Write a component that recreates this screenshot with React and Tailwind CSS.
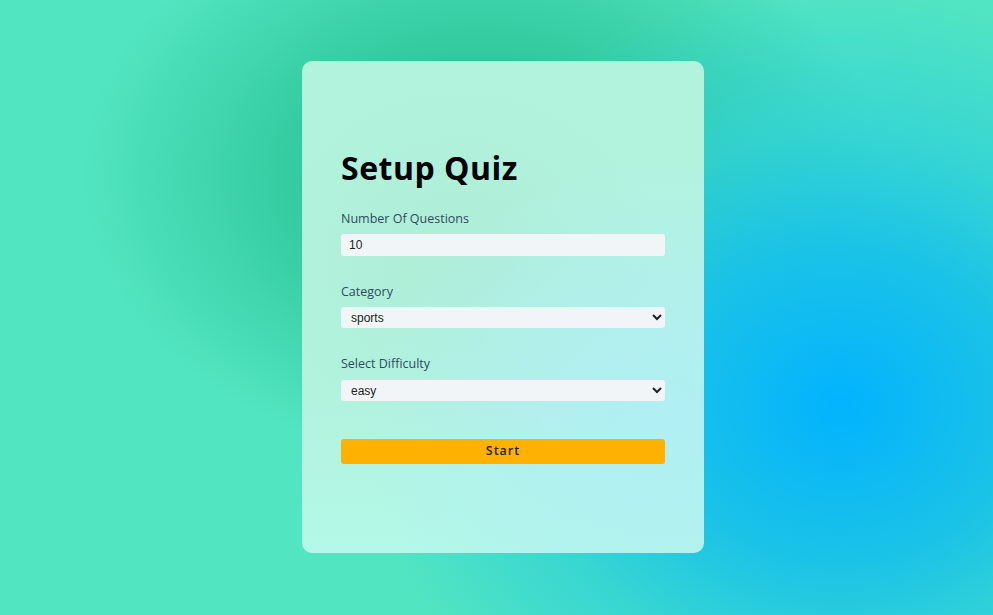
import { useState } from 'react'

export default function App() {
  const [amount, setAmount] = useState(10)
  const [category, setCategory] = useState('sports')
  const [difficulty, setDifficulty] = useState('easy')

  return (
    <main
      className="min-h-[615px] w-full flex items-start justify-center pt-[61px] pl-[13px] bg-[#52e5c1]"
      style={{
        backgroundImage:
          'radial-gradient(ellipse 480px 420px at 840px 405px, #02b3fe 0%, rgba(24,193,232,0.95) 38%, rgba(44,208,218,0.7) 65%, rgba(82,229,193,0) 100%), radial-gradient(ellipse 400px 290px at 480px 175px, #2bc396 0%, rgba(43,195,150,0.85) 40%, rgba(82,229,193,0) 100%)',
      }}
    >
      <section
        className="w-[402px] h-[492px] rounded-[10px] bg-[#b2f3de] px-[39px] pt-[87px] font-['Open_Sans','Noto_Sans',sans-serif]"
        style={{
          backgroundImage:
            'radial-gradient(ellipse 300px 260px at 360px 360px, #b0eff4 0%, rgba(176,239,244,0.6) 50%, rgba(178,243,222,0) 100%), radial-gradient(ellipse 200px 180px at 160px 200px, #aeedd6 0%, rgba(174,237,214,0) 100%), linear-gradient(180deg, rgba(180,246,224,0) 70%, #b3f8e8 100%)',
        }}
      >
        <h2 className="text-[32px] leading-[40px] font-bold tracking-[0.5px] text-black mb-[23px]">Setup Quiz</h2>

        <div className="mb-[28px]">
          <label htmlFor="amount" className="block text-[12.5px] leading-[16px] text-[#2f4a5f] mb-[7px]">
            Number Of Questions
          </label>
          <input
            id="amount"
            type="number"
            value={amount}
            onChange={(e) => setAmount(e.target.value)}
            className="block w-full h-[22px] rounded-[3px] bg-[#f1f5f8] px-[8px] text-[12px] text-[#222] font-['Liberation_Sans',Arial,sans-serif] outline-none [appearance:textfield] [&::-webkit-inner-spin-button]:appearance-none"
          />
        </div>

        <div className="mb-[28px]">
          <label htmlFor="category" className="block text-[12.5px] leading-[16px] text-[#2f4a5f] mb-[7px]">
            Category
          </label>
          <select
            id="category"
            value={category}
            onChange={(e) => setCategory(e.target.value)}
            className="block w-full h-[21px] rounded-[3px] bg-[#f1f5f8] pl-[6px] text-[12px] text-[#222] font-['Liberation_Sans',Arial,sans-serif] outline-none"
          >
            <option value="sports">sports</option>
            <option value="history">history</option>
            <option value="politics">politics</option>
          </select>
        </div>

        <div className="mb-[38px]">
          <label htmlFor="difficulty" className="block text-[12.5px] leading-[16px] text-[#2f4a5f] mb-[8px]">
            Select Difficulty
          </label>
          <select
            id="difficulty"
            value={difficulty}
            onChange={(e) => setDifficulty(e.target.value)}
            className="block w-full h-[21px] rounded-[3px] bg-[#f1f5f8] pl-[6px] text-[12px] text-[#222] font-['Liberation_Sans',Arial,sans-serif] outline-none"
          >
            <option value="easy">easy</option>
            <option value="medium">medium</option>
            <option value="hard">hard</option>
          </select>
        </div>

        <button
          type="submit"
          className="block w-full h-[25px] rounded-[3px] bg-[#ffb100] text-[12.5px] font-semibold tracking-[1px] text-[#222]"
        >
          Start
        </button>
      </section>
    </main>
  )
}
